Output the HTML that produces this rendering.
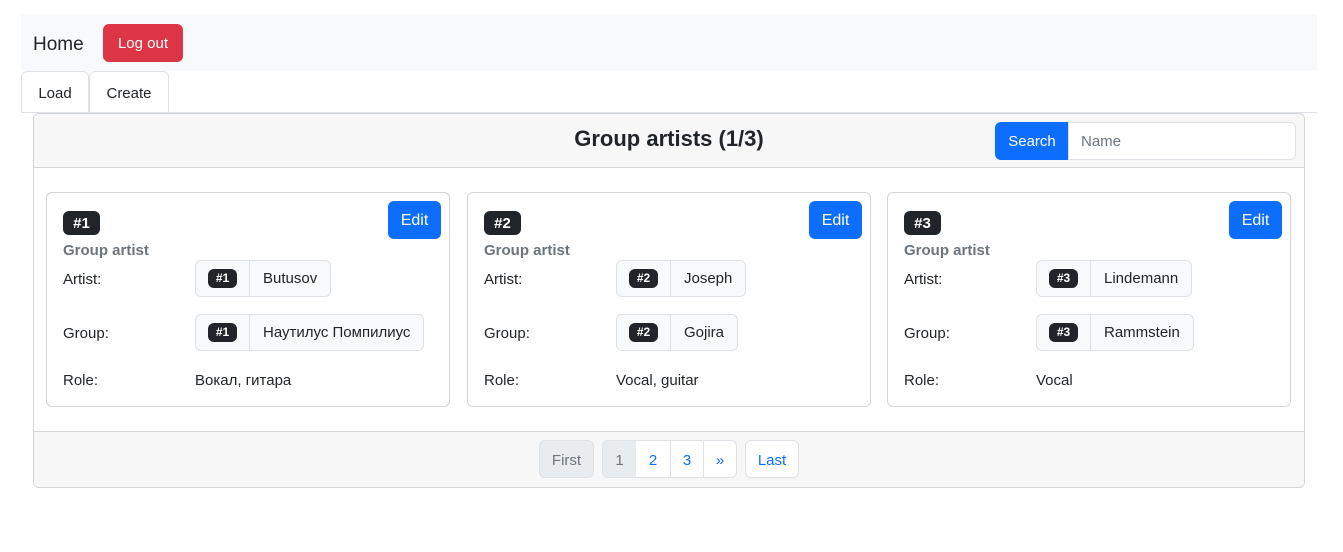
<!DOCTYPE html>
<html><head><meta charset="utf-8"><style>
*{box-sizing:border-box;margin:0;padding:0}
body{width:1343px;height:552px;background:#fff;font-family:"Liberation Sans",sans-serif;font-size:15px;color:#212529;position:relative;overflow:hidden}
.abs{position:absolute}
.nav{left:21px;top:15px;width:1296px;height:56px;background:#f8f9fa}
.home{left:33px;top:34px;font-size:19px;color:#212529}
.logout{left:103px;top:24px;width:80px;height:38px;background:#dc3545;color:#fff;border-radius:6px;font-size:15px;text-align:center;line-height:40px}
.tab{top:71px;height:42px;border:1px solid #dee2e6;border-bottom:none;border-radius:6px 6px 0 0;line-height:43px;text-align:center;font-size:15px;background:#fff}
.tabline{left:21px;top:112px;width:1296px;height:1px;background:#dee2e6}
.card{left:33px;top:113px;width:1272px;height:375px;border:1px solid #d3d5d7;border-radius:6px;overflow:hidden}
.hdr{left:0;top:0;width:100%;height:54px;background:#f7f7f7;border-bottom:1px solid #d3d5d7}
.ftr{left:0;bottom:0;width:100%;height:56px;background:#f7f7f7;border-top:1px solid #d3d5d7}
.title{left:0;width:100%;top:12px;text-align:center;font-size:22px;font-weight:bold;color:#212529}
.sbtn{left:961px;top:8px;width:74px;height:38px;background:#0d6efd;color:#fff;border-radius:6px 0 0 6px;line-height:40px;text-align:center}
.sin{left:1034px;top:8px;width:228px;height:38px;border:1px solid #dee2e6;border-radius:0 6px 6px 0;background:#fff;line-height:38px;padding-left:12px;color:#6c757d}
.ic{top:78px;width:404px;height:215px;border:1px solid #d3d5d7;border-radius:6px;background:#fff}
.badge{background:#212529;color:#fff;font-weight:bold;border-radius:6px;text-align:center}
.b1{left:16px;top:18px;width:37px;height:24px;line-height:25px;font-size:15px}
.edit{right:8px;top:8px;width:53px;height:38px;background:#0d6efd;color:#fff;border-radius:6px;line-height:39px;text-align:center;font-size:16px}
.ga{left:16px;top:49px;font-weight:bold;color:#6c757d;font-size:15px}
.lbl{left:16px}
.pill{left:148px;height:37px;border:1px solid #dee2e6;border-radius:6px;background:#f8f9fa;display:flex;align-items:center}
.pill .badge{font-size:12px;height:19px;line-height:19px;width:29px;margin:0 12px}
.pill span.t{border-left:1px solid #dee2e6;height:100%;line-height:36px;padding:0 13px}
.pg{top:8px;height:38px;border:1px solid #dee2e6;line-height:39px;text-align:center;color:#0d6efd;background:#fff}
</style></head><body>
<div class="abs nav"></div>
<div class="abs home">Home</div>
<div class="abs logout">Log out</div>
<div class="abs tab" style="left:21px;width:68px">Load</div>
<div class="abs tab" style="left:89px;width:80px">Create</div>
<div class="abs tabline"></div>
<div class="abs card">
 <div class="abs hdr">
  <div class="abs title">Group artists (1/3)</div>
  <div class="abs sbtn">Search</div>
  <div class="abs sin">Name</div>
 </div>

 <div class="abs ic" style="left:12px">
  <div class="abs badge b1">#1</div><div class="abs edit">Edit</div>
  <div class="abs ga">Group artist</div>
  <div class="abs lbl" style="top:78px">Artist:</div>
  <div class="abs pill" style="top:67px"><span class="badge">#1</span><span class="t">Butusov</span></div>
  <div class="abs lbl" style="top:132px">Group:</div>
  <div class="abs pill" style="top:121px"><span class="badge">#1</span><span class="t">Наутилус Помпилиус</span></div>
  <div class="abs lbl" style="top:179px">Role:</div>
  <div class="abs" style="left:148px;top:179px">Вокал, гитара</div>
 </div>
 <div class="abs ic" style="left:433px">
  <div class="abs badge b1">#2</div><div class="abs edit">Edit</div>
  <div class="abs ga">Group artist</div>
  <div class="abs lbl" style="top:78px">Artist:</div>
  <div class="abs pill" style="top:67px"><span class="badge">#2</span><span class="t">Joseph</span></div>
  <div class="abs lbl" style="top:132px">Group:</div>
  <div class="abs pill" style="top:121px"><span class="badge">#2</span><span class="t">Gojira</span></div>
  <div class="abs lbl" style="top:179px">Role:</div>
  <div class="abs" style="left:148px;top:179px">Vocal, guitar</div>
 </div>
 <div class="abs ic" style="left:853px">
  <div class="abs badge b1">#3</div><div class="abs edit">Edit</div>
  <div class="abs ga">Group artist</div>
  <div class="abs lbl" style="top:78px">Artist:</div>
  <div class="abs pill" style="top:67px"><span class="badge">#3</span><span class="t">Lindemann</span></div>
  <div class="abs lbl" style="top:132px">Group:</div>
  <div class="abs pill" style="top:121px"><span class="badge">#3</span><span class="t">Rammstein</span></div>
  <div class="abs lbl" style="top:179px">Role:</div>
  <div class="abs" style="left:148px;top:179px">Vocal</div>
 </div>

 <div class="abs ftr">
  <div class="abs pg" style="left:505px;width:55px;background:#e9ecef;color:#6c757d;border-radius:6px">First</div>
  <div class="abs pg" style="left:568px;width:35px;background:#e9ecef;color:#6c757d;border-radius:6px 0 0 6px">1</div>
  <div class="abs pg" style="left:602px;width:35px;border-left:none">2</div>
  <div class="abs pg" style="left:636px;width:34px">3</div>
  <div class="abs pg" style="left:669px;width:34px;border-radius:0 6px 6px 0">»</div>
  <div class="abs pg" style="left:711px;width:54px;border-radius:6px">Last</div>
 </div>
</div>
</body></html>
